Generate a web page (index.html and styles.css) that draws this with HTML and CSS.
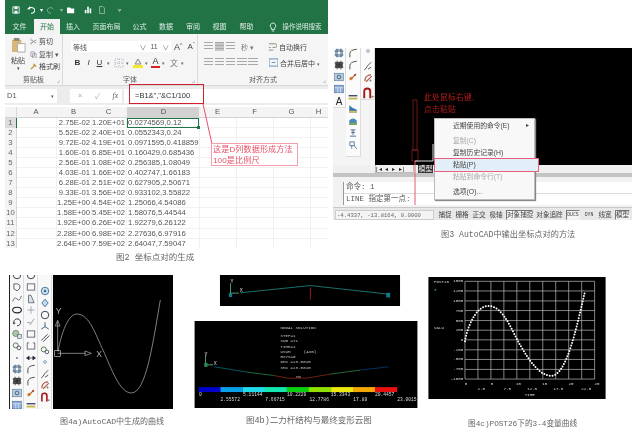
FILE: index.html
```html
<!DOCTYPE html>
<html lang="zh">
<head>
<meta charset="utf-8">
<title>坐标点对的生成</title>
<link rel="stylesheet" href="styles.css">
</head>
<body>
<svg class="defs" aria-hidden="true">
  <symbol id="i-cross" viewBox="0 0 16 16"><path d="M3 3h10v10H3zM1 5h14M1 11h14M5 1v14M11 1v14" fill="none" stroke="#4a6a8a" stroke-width="1.4"/></symbol>
  <symbol id="i-dark" viewBox="0 0 16 16"><path d="M2 3h12v10H2z" fill="#333"/><path d="M1 5h14M1 11h14M5 1v14M11 1v14" stroke="#555" stroke-width="1.4"/></symbol>
  <symbol id="i-img" viewBox="0 0 16 16"><rect x="1" y="2" width="14" height="12" fill="#b8cde0" stroke="#5a7a9a"/><circle cx="8" cy="8" r="3" fill="none" stroke="#3a5a7a" stroke-width="1.4"/></symbol>
  <symbol id="i-table" viewBox="0 0 16 16"><rect x="1" y="2" width="14" height="12" fill="#8fb0d8" stroke="#4a6a9a"/><path d="M1 6h14M6 6v8M10.500 6v8" stroke="#e8f0f8"/></symbol>
  <symbol id="i-fillet" viewBox="0 0 16 16"><path d="M3 15V9Q3 3 14 2" fill="none" stroke="#555" stroke-width="1.6"/></symbol>
  <symbol id="i-orange" viewBox="0 0 16 16"><path d="M3 13L13 3" stroke="#9a6a3a" stroke-width="2"/><circle cx="5" cy="10" r="2.600" fill="#d87a2a"/><circle cx="11" cy="5" r="1.500" fill="#c03020"/></symbol>
  <symbol id="i-bar" viewBox="0 0 16 16"><rect x="1" y="5" width="14" height="2" fill="#2a3a5a"/><rect x="1" y="9" width="14" height="3" fill="#c8b84a"/></symbol>
  <symbol id="i-layer" viewBox="0 0 16 16"><path d="M2 2l5 4 7 3v5H2z" fill="#3a7ab0"/><rect x="2" y="11" width="12" height="3" fill="#d8c060"/></symbol>
  <symbol id="i-layer2" viewBox="0 0 16 16"><path d="M2 7Q8 1 14 7v7H2z" fill="#4a8ab8"/><rect x="2" y="11" width="12" height="3" fill="#7aa850"/></symbol>
  <symbol id="i-stamp" viewBox="0 0 16 16"><path d="M4 3h8M8 3v8M3 13h10M5 7h6" stroke="#4a6a90" stroke-width="1.500" fill="none"/></symbol>
  <symbol id="i-stamp2" viewBox="0 0 16 16"><path d="M3 3h7v6H3zM6 9v5M9 8l5 6" stroke="#5a7a9a" stroke-width="1.500" fill="none"/></symbol>
  <symbol id="i-dot" viewBox="0 0 16 16"><circle cx="8" cy="8" r="2.200" fill="none" stroke="#6a8aa8" stroke-width="1.200"/></symbol>
  <symbol id="i-break" viewBox="0 0 16 16"><path d="M2 14Q5 13 7 8L13 2M8 13l5-3" stroke="#444" stroke-width="1.400" fill="none"/></symbol>
  <symbol id="i-ref" viewBox="0 0 16 16"><path d="M3 13C3 4 10 3 13 3M5 14l9-9" stroke="#b05a4a" stroke-width="1.800" fill="none"/><circle cx="12" cy="12" r="1.500" fill="#777"/></symbol>
  <symbol id="i-arch" viewBox="0 0 16 16"><path d="M3 15V6Q3 2 7 2t4 4v9" stroke="#a81818" stroke-width="2.600" fill="none"/><circle cx="14" cy="13" r="1.500" fill="#888"/></symbol>
  <symbol id="i-ring" viewBox="0 0 16 16"><circle cx="8" cy="8" r="6" fill="none" stroke="#445" stroke-width="1.600"/></symbol>
  <symbol id="i-ringb" viewBox="0 0 16 16"><circle cx="8" cy="8" r="6" fill="#cfe0ee" stroke="#3a6a98" stroke-width="1.400"/><circle cx="8" cy="8" r="2" fill="#3a6a98"/></symbol>
  <symbol id="i-blob" viewBox="0 0 16 16"><path d="M3 3h6l4 3-1 5-4 3-5-3z" fill="none" stroke="#445" stroke-width="1.300"/></symbol>
  <symbol id="i-wave" viewBox="0 0 16 16"><path d="M1 12Q4 3 8 8t7-5" fill="none" stroke="#556" stroke-width="1.300"/></symbol>
  <symbol id="i-ell" viewBox="0 0 16 16"><ellipse cx="8" cy="8" rx="7" ry="4.500" fill="none" stroke="#223" stroke-width="1.800"/></symbol>
  <symbol id="i-arc" viewBox="0 0 16 16"><path d="M3 10a5.500 5.500 0 1 1 5 4" fill="none" stroke="#334" stroke-width="1.600"/><path d="M1 9h5l-3 3z" fill="#334"/></symbol>
  <symbol id="i-hatch" viewBox="0 0 16 16"><circle cx="6" cy="7" r="5" fill="#a8c8a0" stroke="#567"/><rect x="9" y="9" width="6" height="6" fill="#ddd" stroke="#567"/></symbol>
  <symbol id="i-hatch2" viewBox="0 0 16 16"><circle cx="6" cy="7" r="4" fill="none" stroke="#4a7a4a" stroke-width="1.500"/><circle cx="11" cy="11" r="3" fill="none" stroke="#556" stroke-width="1.500"/></symbol>
  <symbol id="i-pt" viewBox="0 0 16 16"><circle cx="8" cy="8" r="1.300" fill="#223"/></symbol>
  <symbol id="i-sq" viewBox="0 0 16 16"><rect x="2" y="3" width="12" height="10" fill="none" stroke="#556" stroke-width="1.300"/></symbol>
  <symbol id="i-sq2" viewBox="0 0 16 16"><path d="M2 3h3M11 3h3v10H2V3" fill="none" stroke="#556" stroke-width="1.300"/></symbol>
  <symbol id="i-arrows" viewBox="0 0 16 16"><path d="M1 8h14M5 5L1 8l4 3zM11 5l4 3-4 3z" fill="#223" stroke="#223"/></symbol>
  <symbol id="i-tick" viewBox="0 0 16 16"><path d="M8 2v12M2 8h12" stroke="#8a9aa8" stroke-width="1.200"/></symbol>
  <symbol id="i-slash" viewBox="0 0 16 16"><path d="M2 9h5M6 13L13 3" stroke="#7a8a98" stroke-width="1.300"/></symbol>
  <symbol id="i-tri" viewBox="0 0 16 16"><path d="M4 14V2h4l5 12z" fill="#d8e0e8" stroke="#556" stroke-width="1.200"/></symbol>
  <symbol id="i-fork" viewBox="0 0 16 16"><path d="M8 2v7M8 9L2 13M8 9l6 4" stroke="#3a5a7a" stroke-width="1.500" fill="none"/></symbol>
  <symbol id="i-para" viewBox="0 0 16 16"><path d="M2 12L12 2M5 14L15 4" stroke="#445" stroke-width="1.500"/></symbol>
  <symbol id="i-diamond" viewBox="0 0 16 16"><path d="M8 2l5 6-5 6-5-6z" fill="#c8dcec" stroke="#2a6a9a" stroke-width="1.400"/></symbol>
</svg>

<main class="canvas">

  <section class="excel">
    <div class="qat">
      <svg class="qi" viewBox="0 0 10 10"><path d="M1 1h8v8H1z" fill="none" stroke="#fff"/><path d="M3 1h4v3H3zM3 6h4v3H3z" fill="#fff"/></svg>
      <svg class="qi ml7" viewBox="0 0 10 10"><path d="M2 4a4 3.500 0 1 1 3 5" fill="none" stroke="#fff" stroke-width="1.300"/><path d="M0 4h4V0z" fill="#fff"/></svg>
      <span class="qdrop">▾</span>
      <svg class="qi dim" viewBox="0 0 10 10"><path d="M8 4a4 3.500 0 1 0-3 5" fill="none" stroke="#b8d4c4" stroke-width="1"/></svg>
      <span class="qdrop dim">▾</span>
      <svg class="qi" viewBox="0 0 10 10"><path d="M0 2h4l1 1h4v6H0z" fill="#fff"/></svg>
      <svg class="qi ml9" viewBox="0 0 10 10"><path d="M1 5h2v4H1zM4 1h2v8H4zM7 3h2v6H7z" fill="#fff"/></svg>
      <svg class="qi ml6 dim" viewBox="0 0 10 10"><path d="M2 .5h4l2 2v7H2z" fill="none" stroke="#d8e8de"/></svg>
      <span class="qdrop last">▿</span>
    </div>
    <nav class="tabs">
      <span class="tab w29">文件</span>
      <span class="tab w26 active">开始</span>
      <span class="tab w26">插入</span>
      <span class="tab w41">页面布局</span>
      <span class="tab w25">公式</span>
      <span class="tab w28">数据</span>
      <span class="tab w26">审阅</span>
      <span class="tab w27">视图</span>
      <span class="tab w27">帮助</span>
      <svg class="bulb" viewBox="0 0 10 12"><path d="M5 1a3.500 3.500 0 0 0-2 6.300V9h4V7.300A3.500 3.500 0 0 0 5 1zM3.500 11h3" fill="none" stroke="#fff"/></svg>
      <span class="tab search">操作说明搜索</span>
    </nav>

    <div class="ribbon">
      <div class="group clip">
        <div class="group-body clip-body">
          <div class="paste">
            <svg class="paste-ic" viewBox="0 0 16 16"><rect x="1" y="2" width="10" height="13" fill="#d8b878"/><rect x="3" y="0" width="6" height="3" fill="#8a8a7a"/><path d="M7 6h8v9H7z" fill="#fff" stroke="#aaa"/></svg>
            <span class="paste-t">粘贴</span>
            <span class="paste-d">▾</span>
          </div>
          <div class="clip-list">
            <span class="clip-item"><i class="ci">✂</i>剪切</span>
            <span class="clip-item faint"><svg class="cs" viewBox="0 0 8 8"><path d="M1 1h4v5H1zM3 3h4v5H3z" fill="#fff" stroke="#99a"/></svg>复制 ▾</span>
            <span class="clip-item"><svg class="cs" viewBox="0 0 8 8"><path d="M1 7l4-4M4 1l3 3" stroke="#c09030" stroke-width="1.500"/></svg>格式刷</span>
          </div>
        </div>
        <div class="group-label">剪贴板<i class="launch">⌟</i></div>
      </div>

      <div class="group font">
        <div class="group-body font-body">
          <div class="font-row">
            <span class="combo name"><span>等线</span><b>∨</b></span>
            <span class="combo size"><span>11</span><b>∨</b></span>
            <span class="grow">A<sup>^</sup></span>
            <span class="grow small">A<sup>ˇ</sup></span>
          </div>
          <div class="font-row second">
            <b class="fb">B</b>
            <i class="fi">I</i>
            <u class="fu">U</u><span class="dd">▾</span>
            <svg class="fic" viewBox="0 0 10 10"><path d="M1 1h8v8H1zM5 1v8M1 5h8" fill="none" stroke="#b0b8c0" stroke-dasharray="1 1"/></svg><span class="dd">▾</span>
            <svg class="fic" viewBox="0 0 10 10"><path d="M5 1L2 6h6z" fill="#eee" stroke="#888"/><rect x="0" y="7" width="10" height="3" fill="#f2e92a"/></svg><span class="dd">▾</span>
            <span class="fa">A</span><span class="dd">▾</span>
            <span class="fw">文</span><span class="dd">▾</span>
          </div>
        </div>
        <div class="group-label">字体<i class="launch">⌟</i></div>
      </div>

      <div class="group align">
        <div class="group-body align-body">
          <div class="align-row">
            <span class="lines"></span><span class="lines sel"></span><span class="lines"></span>
            <span class="orient">秒 ▾</span>
            <svg class="wrap-ic" viewBox="0 0 10 10"><path d="M1 2h7a2 2 0 0 1 0 4H5M1 6h2M1 9h5" fill="none" stroke="#7a8a70"/></svg>
            <span class="align-t">自动换行</span>
          </div>
          <div class="align-row">
            <span class="lines"></span><span class="lines"></span><span class="lines"></span>
            <span class="indent"></span><span class="indent"></span>
            <svg class="wrap-ic merge" viewBox="0 0 10 10"><path d="M0 1h10v8H0zM3 5h4" fill="none" stroke="#5a8ac0"/></svg>
            <span class="align-t">合并后居中 <i class="dd">▾</i></span>
          </div>
        </div>
        <div class="group-label">对齐方式<i class="launch">⌟</i></div>
      </div>
    </div>

    <div class="formula">
      <span class="namebox">D1<i>▾</i></span>
      <span class="fx-btns"><i class="x">×</i><i class="ok">✓</i><i class="fx">fx</i></span>
      <span class="finput">=B1&amp;","&amp;C1/100</span>
    </div>

    <div class="sheet">
      <div class="row head">
        <span class="rh corner"></span><span class="c a">A</span><span class="c b">B</span><span class="c c3">C</span><span class="c d hi">D</span><span class="c e">E</span><span class="c e">F</span><span class="c e">G</span><span class="c h">H</span>
      </div>
      <div class="row"><span class="rh sel">1</span><span class="c a"></span><span class="c b">2.75E-02</span><span class="c c3">1.20E+01</span><span class="c d active-cell">0.0274569,0.12<i class="handle"></i></span><span class="rest"></span></div>
      <div class="row"><span class="rh">2</span><span class="c a"></span><span class="c b">5.52E-02</span><span class="c c3">2.40E+01</span><span class="c d">0.0552343,0.24</span><span class="rest"></span></div>
      <div class="row"><span class="rh">3</span><span class="c a"></span><span class="c b">9.72E-02</span><span class="c c3">4.19E+01</span><span class="c d">0.0971595,0.418859</span><span class="rest"></span></div>
      <div class="row"><span class="rh">4</span><span class="c a"></span><span class="c b">1.60E-01</span><span class="c c3">6.85E+01</span><span class="c d">0.160429,0.685436</span><span class="rest"></span></div>
      <div class="row"><span class="rh">5</span><span class="c a"></span><span class="c b">2.56E-01</span><span class="c c3">1.08E+02</span><span class="c d">0.256385,1.08049</span><span class="rest"></span></div>
      <div class="row"><span class="rh">6</span><span class="c a"></span><span class="c b">4.03E-01</span><span class="c c3">1.66E+02</span><span class="c d">0.402747,1.66183</span><span class="rest"></span></div>
      <div class="row"><span class="rh">7</span><span class="c a"></span><span class="c b">6.28E-01</span><span class="c c3">2.51E+02</span><span class="c d">0.627905,2.50671</span><span class="rest"></span></div>
      <div class="row"><span class="rh">8</span><span class="c a"></span><span class="c b">9.33E-01</span><span class="c c3">3.56E+02</span><span class="c d">0.933102,3.55822</span><span class="rest"></span></div>
      <div class="row"><span class="rh">9</span><span class="c a"></span><span class="c b">1.25E+00</span><span class="c c3">4.54E+02</span><span class="c d">1.25066,4.54086</span><span class="rest"></span></div>
      <div class="row"><span class="rh">10</span><span class="c a"></span><span class="c b">1.58E+00</span><span class="c c3">5.45E+02</span><span class="c d">1.58076,5.44544</span><span class="rest"></span></div>
      <div class="row"><span class="rh">11</span><span class="c a"></span><span class="c b">1.92E+00</span><span class="c c3">6.26E+02</span><span class="c d">1.92279,6.26122</span><span class="rest"></span></div>
      <div class="row"><span class="rh">12</span><span class="c a"></span><span class="c b">2.28E+00</span><span class="c c3">6.98E+02</span><span class="c d">2.27636,6.97916</span><span class="rest"></span></div>
      <div class="row"><span class="rh">13</span><span class="c a"></span><span class="c b">2.64E+00</span><span class="c c3">7.59E+02</span><span class="c d">2.64047,7.59047</span><span class="rest"></span></div>
    </div>
  </section>

  <div class="redbox"></div>
  <svg class="leader" viewBox="0 0 12 40"><path d="M1 0L10 40" stroke="#e8506a" fill="none"/></svg>
  <div class="callout">这是D列数据形成方法<br>100是比例尺</div>
  <p class="cap cap2">图2 坐标点对的生成</p>

  <section class="acad">
    <div class="acad-main">
      <div class="tools">
        <div class="tcol t1">
          <svg class="ti"><use href="#i-cross"/></svg>
          <svg class="ti"><use href="#i-dark"/></svg>
          <svg class="ti"><use href="#i-img"/></svg>
          <svg class="ti"><use href="#i-table"/></svg>
          <span class="ti-a">A</span>
        </div>
        <div class="tcol t2">
          <svg class="ti"><use href="#i-fillet"/></svg>
          <svg class="ti"><use href="#i-fillet"/></svg>
          <svg class="ti"><use href="#i-orange"/></svg>
          <svg class="ti spaced"><use href="#i-bar"/></svg>
          <svg class="ti"><use href="#i-layer"/></svg>
          <svg class="ti"><use href="#i-layer2"/></svg>
          <svg class="ti"><use href="#i-stamp"/></svg>
          <svg class="ti"><use href="#i-stamp2"/></svg>
        </div>
        <div class="tcol t3">
          <svg class="ti"><use href="#i-dot"/></svg>
          <svg class="ti sep"><use href="#i-break"/></svg>
          <svg class="ti"><use href="#i-ref"/></svg>
          <svg class="ti big"><use href="#i-arch"/></svg>
        </div>
      </div>
      <div class="acad-black"></div>
    </div>
    <div class="layout-bar">
      <span class="nav">|◂ ◂ ▸ ▸|</span>
      <span class="model-tab">模型</span>
    </div>
    <div class="acad-strip"></div>
    <div class="cmd">
      <div class="cmd-line">命令: 1</div>
      <div class="cmd-line">LINE 指定第一点:</div>
    </div>
    <div class="status">
      <span class="coords">-4.4337, -13.8164, 0.0000</span>
      <span class="st w14">捕捉</span>
      <span class="st w14">栅格</span>
      <span class="st w14">正交</span>
      <span class="st w14">极轴</span>
      <span class="st w27 on">对象捕捉</span>
      <span class="st w27">对象追踪</span>
      <span class="st w14 on latin">DUCS</span>
      <span class="st w12 latin">DYN</span>
      <span class="st w14">线宽</span>
      <span class="st w15 on">模型</span>
    </div>

    <svg class="acad-marks" viewBox="0 0 299 172">
      <path d="M80 52h4v50h-4zM79 102h6v11h-6z" fill="none" stroke="#a02020" stroke-width=".7"/>
      <path d="M82 113V157" stroke="#e85a70" fill="none"/>
      <path d="M82 113H100V96" stroke="#ddd" fill="none"/>
    </svg>
    <div class="acad-note">此处鼠标右键,<br>点击粘贴</div>

    <div class="ctx">
      <div class="ctx-item first"><span>近期使用的命令(E)</span><i>▸</i></div>
      <div class="ctx-item dim g1">复制(C)</div>
      <div class="ctx-item">复制历史记录(H)</div>
      <div class="ctx-item hl">粘贴(P)</div>
      <div class="ctx-item dim">粘贴到命令行(T)</div>
      <div class="ctx-item g2">选项(O)...</div>
    </div>
  </section>
  <p class="cap cap3">图3 AutoCAD中输出坐标点对的方法</p>

  <section class="fig4a">
    <div class="tools4">
      <div class="t4col">
        <svg class="ti4"><use href="#i-ring"/></svg>
        <svg class="ti4"><use href="#i-blob"/></svg>
        <svg class="ti4"><use href="#i-wave"/></svg>
        <svg class="ti4"><use href="#i-ell"/></svg>
        <svg class="ti4"><use href="#i-arc"/></svg>
        <svg class="ti4"><use href="#i-hatch"/></svg>
        <svg class="ti4"><use href="#i-hatch2"/></svg>
        <svg class="ti4"><use href="#i-pt"/></svg>
        <svg class="ti4"><use href="#i-cross"/></svg>
        <svg class="ti4"><use href="#i-dark"/></svg>
        <svg class="ti4"><use href="#i-img"/></svg>
        <svg class="ti4"><use href="#i-table"/></svg>
      </div>
      <div class="t4col">
        <svg class="ti4"><use href="#i-ring"/></svg>
        <svg class="ti4"><use href="#i-sq"/></svg>
        <svg class="ti4"><use href="#i-tri"/></svg>
        <svg class="ti4"><use href="#i-tick"/></svg>
        <svg class="ti4"><use href="#i-slash"/></svg>
        <svg class="ti4"><use href="#i-sq"/></svg>
        <svg class="ti4"><use href="#i-sq2"/></svg>
        <svg class="ti4"><use href="#i-arrows"/></svg>
        <svg class="ti4"><use href="#i-fillet"/></svg>
        <svg class="ti4"><use href="#i-fillet"/></svg>
        <svg class="ti4"><use href="#i-orange"/></svg>
        <svg class="ti4"><use href="#i-bar"/></svg>
      </div>
      <div class="t4col third">
        <svg class="ti4 gap"><use href="#i-ringb"/></svg>
        <svg class="ti4"><use href="#i-diamond"/></svg>
        <svg class="ti4"><use href="#i-ring"/></svg>
        <svg class="ti4"><use href="#i-fork"/></svg>
        <svg class="ti4"><use href="#i-para"/></svg>
        <svg class="ti4"><use href="#i-hatch2"/></svg>
        <svg class="ti4"><use href="#i-dot"/></svg>
        <svg class="ti4"><use href="#i-break"/></svg>
        <svg class="ti4"><use href="#i-ref"/></svg>
        <svg class="ti4"><use href="#i-arch"/></svg>
      </div>
    </div>
    <svg class="cad-plot" viewBox="160 30 360 402">
      <rect x="160" y="30" width="360" height="402" fill="#000"/>
      <path d="M175 260C185 205 205 147 232 147C270 147 290 215 310 255C335 310 360 384 395 384C440 384 460 230 482 105" fill="none" stroke="#bdbdbd" stroke-width="2"/>
      <path d="M174 255V168M174 265H258" stroke="#bbb" stroke-width="2" fill="none"/>
      <path d="M174 166l-7 17h14zM275 265l-19-7v14z" fill="none" stroke="#bbb" stroke-width="2"/>
      <rect x="165" y="257" width="17" height="17" fill="none" stroke="#ccc" stroke-width="2"/>
      <text class="ucs" x="168" y="148">Y</text>
      <text class="ucs" x="290" y="275">X</text>
    </svg>
  </section>
  <p class="cap cap4a">图4a)AutoCAD中生成的曲线</p>

  <svg class="fig4b-top" viewBox="88 30 546 94">
    <rect x="88" y="30" width="546" height="94" fill="#000"/>
    <path d="M150 84L362 62L598 88" fill="none" stroke="#2aa8a8" stroke-width="2"/>
    <path d="M362 68V105" stroke="#a01818" stroke-width="3"/>
    <path d="M120 92V55M120 85H145" stroke="#7fe8a0" stroke-width="2" fill="none"/>
    <path d="M115 85h10v12h-10z" fill="#127a8a"/>
    <path d="M592 84h12v14h-12z" fill="#127a8a"/>
    <text class="mini" x="120" y="53">Y</text>
    <text class="mini" x="148" y="82">X</text>
  </svg>

  <section class="fig4b">
    <svg class="nodal-svg" viewBox="12 168 671 262">
      <rect x="12" y="168" width="671" height="262" fill="#000"/>
      <g class="nodal">
        <text x="271" y="191">NODAL SOLUTION</text>
        <text x="271" y="216">STEP=1</text>
        <text x="271" y="232">SUB =71</text>
        <text x="271" y="248">TIME=1</text>
        <text x="271" y="264">USUM</text>
        <text x="341" y="264">(AVG)</text>
        <text x="271" y="280">RSYS=0</text>
        <text x="271" y="296">DMX =23.0015</text>
        <text x="271" y="312">SMX =23.0015</text>
        <text x="318" y="339">MX</text>
      </g>
      <path d="M72 306L170 322" stroke="#0c7a9a" stroke-width="2" fill="none"/>
      <path d="M170 322L250 332" stroke="#2aa050" stroke-width="2" fill="none"/>
      <path d="M250 332L292 340H350L420 328" stroke="#a83018" stroke-width="2" fill="none"/>
      <path d="M420 328L510 316" stroke="#3a9a50" stroke-width="2" fill="none"/>
      <path d="M510 316L596 306" stroke="#0a4a90" stroke-width="2" fill="none"/>
      <path d="M45 300V270M45 300H68" stroke="#7fe8a0" stroke-width="2" fill="none"/>
      <rect x="41" y="294" width="10" height="12" fill="#2a8a5a"/>
      <text class="mini" x="42" y="274">Y</text>
      <text class="mini" x="70" y="301">X</text>
      <g>
        <rect x="24" y="367" width="67" height="15" fill="#0000c8"/>
        <rect x="90" y="367" width="67" height="15" fill="#0aa0e8"/>
        <rect x="157" y="367" width="67" height="15" fill="#20dcec"/>
        <rect x="223" y="367" width="67" height="15" fill="#14e6b0"/>
        <rect x="290" y="367" width="67" height="15" fill="#08d010"/>
        <rect x="356" y="367" width="67" height="15" fill="#90e000"/>
        <rect x="423" y="367" width="67" height="15" fill="#eee810"/>
        <rect x="489" y="367" width="67" height="15" fill="#f4a808"/>
        <rect x="555" y="367" width="67" height="15" fill="#e81010"/>
      </g>
      <g class="scale">
        <text x="25" y="395">0</text>
        <text x="158" y="395">5.11144</text>
        <text x="290" y="395">10.2229</text>
        <text x="422" y="395">15.3343</text>
        <text x="555" y="395">20.4457</text>
        <text x="90" y="409">2.55572</text>
        <text x="225" y="409">7.66715</text>
        <text x="358" y="409">12.7786</text>
        <text x="490" y="409">17.89</text>
        <text x="622" y="409">23.0015</text>
      </g>
    </svg>
  </section>
  <p class="cap cap4b">图4b)二力杆结构与最终变形云图</p>

  <svg class="fig4c" viewBox="25 35 533 367">
    <rect x="25" y="35" width="533" height="367" fill="#000"/>
    <path class="grid-lines" d="M135 48V342M174 48V342M213 48V342M252 48V342M291 48V342M330 48V342M369 48V342M408 48V342M447 48V342M486 48V342M525 48V342M135 48H525M135 77H525M135 107H525M135 136H525M135 166H525M135 195H525M135 224H525M135 254H525M135 283H525M135 313H525M135 342H525"/>
    <path class="dots" d="M135 228C140 195 165 122 205 122C250 122 275 195 300 238C330 290 360 332 395 332C440 332 470 190 495 83"/>
    <g class="plot-t">
      <text x="42" y="52">POST26</text>
      <text x="42" y="77" class="g">3</text>
      <text x="42" y="191">VALU</text>
      <g class="yaxis">
        <text x="130" y="51">1500</text><text x="130" y="80">1250</text><text x="130" y="110">1000</text><text x="130" y="139">750</text><text x="130" y="169">500</text><text x="130" y="198">250</text><text x="130" y="227">0</text><text x="130" y="257">-250</text><text x="130" y="286">-500</text><text x="130" y="316">-750</text><text x="130" y="345">-1000</text>
      </g>
      <g class="xaxis">
        <text x="138" y="360">0</text><text x="216" y="360">5</text><text x="296" y="360">10</text><text x="375" y="360">15</text><text x="454" y="360">20</text><text x="532" y="360">25</text>
        <text x="184" y="376">2.5</text><text x="262" y="376">7.5</text><text x="337" y="376">12.5</text><text x="416" y="376">17.5</text><text x="500" y="376">22.5</text>
        <text x="330" y="392">TIME</text>
      </g>
    </g>
  </svg>
  <p class="cap cap4c">图4c)POST26下的3-4变量曲线</p>

</main>
</body>
</html>
```
FILE: styles.css
```css
* { box-sizing: border-box; }
html, body { margin: 0; background: #fff; }
.defs { position: absolute; width: 0; height: 0; }
.canvas {
  position: relative;
  width: 640px;
  height: 441px;
  overflow: hidden;
  background: #fff;
  font-family: "Liberation Sans", "Noto Sans CJK SC", sans-serif;
  color: #555;
  filter: blur(.45px);
}
i { font-style: normal; }

/* ---------- Excel ---------- */
.excel { position: absolute; left: 5px; top: 0; width: 323px; height: 248px; display: flex; flex-direction: column; background: #fff; overflow: hidden; }
.qat { height: 19px; background: #217346; display: flex; align-items: center; padding-left: 7px; color: #fff; font-size: 6px; flex: none; }
.qi { width: 8px; height: 8px; flex: none; }
.qi.dim { opacity: .7; }
.ml6 { margin-left: 6px; } .ml7 { margin-left: 7px; } .ml9 { margin-left: 9px; }
.qdrop { width: 6px; margin: 0 3px; text-align: center; flex: none; }
.qdrop.dim { opacity: .5; }
.qdrop.last { margin-left: 10px; }
.tabs { height: 15px; background: #217346; display: flex; align-items: center; flex: none; font-size: 7px; color: #dcebe3; }
.tab { height: 15px; line-height: 15px; text-align: center; flex: none; }
.w25 { width: 25px; } .w26 { width: 26px; } .w27 { width: 27px; } .w28 { width: 28px; } .w29 { width: 29px; } .w41 { width: 41px; }
.tab.active { background: #f3f3f3; color: #217346; }
.bulb { width: 8px; height: 10px; margin-left: 9px; flex: none; }
.tab.search { margin-left: 5px; width: 40px; font-size: 6.500px; white-space: nowrap; }

.ribbon { height: 52px; display: flex; background: #f5f5f5; border-bottom: 1px solid #d8d8d8; flex: none; }
.group { display: flex; flex-direction: column; border-right: 1px solid #dadada; position: relative; }
.group-body { flex: 1; min-height: 0; }
.group-label { height: 11px; line-height: 12px; font-size: 7px; text-align: center; color: #555; position: relative; flex: none; }
.launch { position: absolute; right: 2px; top: 0; color: #888; font-size: 6px; }
.clip { width: 58px; }
.clip-body { display: flex; padding: 3px 0 0 4px; }
.paste { width: 18px; display: flex; flex-direction: column; align-items: center; font-size: 7px; color: #444; }
.paste-ic { width: 15px; height: 17px; }
.paste-t { line-height: 9px; margin-top: 2px; }
.paste-d { line-height: 7px; font-size: 5px; }
.clip-list { display: flex; flex-direction: column; gap: 3px; padding-left: 3px; }
.clip-item { font-size: 7px; line-height: 9.500px; white-space: nowrap; color: #444; display: flex; align-items: center; }
.clip-item.faint { color: #555; }
.ci { width: 9px; font-size: 7px; color: #555; }
.cs { width: 7px; height: 7px; margin-right: 2px; }
.font { width: 135px; }
.font-body { display: flex; flex-direction: column; gap: 4px; padding: 7px 0 0 8px; }
.font-row { display: flex; align-items: center; height: 11px; }
.combo { display: flex; justify-content: space-between; align-items: center; font-size: 7px; height: 11px; background: #fff; color: #555; padding: 0 2px; }
.combo b { font-weight: 400; color: #777; }
.combo.name { width: 78px; }
.combo.size { width: 23px; margin-left: 0; }
.grow { font-size: 9px; color: #444; width: 12px; text-align: center; margin-left: 1px; }
.grow sup { font-size: 5px; vertical-align: 3px; line-height: 0; }
.grow.small { font-size: 8px; }
.font-row.second { padding-left: 1px; gap: 0; margin-top: 1px; }
.fb, .fi, .fu { font-size: 8px; color: #333; width: 11px; text-align: center; font-style: normal; }
.fi { font-style: italic; }
.dd { font-size: 5px; color: #666; width: 6px; text-align: center; font-style: normal; }
.fic { width: 10px; height: 10px; margin-left: 3px; }
.fa { font-size: 9px; color: #333; border-bottom: 2px solid #d82020; line-height: 9px; width: 9px; text-align: center; margin-left: 2px; }
.fw { font-size: 8px; color: #777; width: 10px; margin-left: 3px; text-align: center; }
.align { flex: 1; border-right: 0; }
.align-body { display: flex; flex-direction: column; gap: 5px; padding: 7px 0 0 5px; }
.align-row { display: flex; align-items: center; height: 11px; }
.lines { width: 11px; height: 9px; background: repeating-linear-gradient(to bottom, #a8a8a8 0 1px, transparent 1px 3px); border-inline: 1px solid transparent; background-clip: padding-box; }
.lines.sel { background-color: #c8c8c8; }
.orient { font-size: 7px; color: #777; width: 20px; margin-left: 5px; }
.indent { width: 10px; height: 9px; margin-left: 1px; background: repeating-linear-gradient(to bottom, #a8a8a8 0 1px, transparent 1px 3px); }
.align-row .indent:first-of-type { margin-left: 5px; }
.wrap-ic { width: 9px; height: 9px; margin-left: 7px; margin-right: 2px; }
.wrap-ic.merge { margin-left: 11px; }
.align-t { font-size: 7px; color: #444; white-space: nowrap; }

.formula { height: 19px; background: #ececec; display: flex; align-items: center; padding: 2px 0; flex: none; font-size: 7.500px; }
.namebox { width: 52px; height: 14px; background: #fff; color: #555; display: flex; justify-content: space-between; align-items: center; padding: 0 3px 0 2px; flex: none; }
.namebox i { font-size: 5px; }
.fx-btns { width: 52px; margin-left: 13px; display: flex; justify-content: space-between; align-items: center; height: 14px; background: #fff; padding: 0 4px 0 8px; flex: none; color: #aaa; }
.fx-btns .fx { font-family: "Liberation Serif", serif; font-style: italic; color: #555; }
.finput { flex: 1; height: 14px; background: #fff; line-height: 14px; padding-left: 11px; color: #333; margin-left: 2px; }

.sheet { flex: 1; display: flex; flex-direction: column; font-size: 7.700px; min-height: 0; padding-top: 2px; }
.row { display: grid; grid-template-columns: 12px 40px 35px 35px 73px 1fr; height: 10.060px; line-height: 10px; flex: none; border-bottom: 1px solid #f1f1f1; }
.row.head { grid-template-columns: 12px 40px 35px 35px 73px 37px 37px 37px 1fr; height: 11px; background: #f4f4f4; border-bottom: 1px solid #d4d4d4; color: #666; }
.rh { background: #f4f4f4; border-right: 1px solid #d8d8d8; text-align: center; color: #666; }
.rh.sel { background: #dcdcdc; border-right: 1px solid #217346; }
.rh.corner { position: relative; }
.c { border-right: 1px solid #f1f1f1; text-align: right; padding-right: 1px; white-space: nowrap; overflow: visible; color: #555; }
.c.a { text-align: center; }
.row .c.d { text-align: left; padding-left: 1px; padding-right: 0; border-right: 1px solid #f1f1f1; }
.head .c { text-align: center; }
.head .c.d { text-align: center; }
.c.hi { background: #d2d2d2; }
.head .c.e, .head .c.h { text-align: center; }
.active-cell { box-shadow: inset 0 0 0 1px #217346; position: relative; }
.handle { position: absolute; right: -1px; bottom: -1px; width: 3px; height: 3px; background: #217346; }
.rest { background: repeating-linear-gradient(to right, transparent 0 36px, #f1f1f1 36px 37px); }

.redbox { position: absolute; left: 129px; top: 84px; width: 75px; height: 20px; border: 1px solid #d02030; }
.leader { position: absolute; left: 202px; top: 104px; width: 12px; height: 40px; overflow: visible; }
.callout { position: absolute; left: 211px; top: 143px; width: 87px; height: 23px; border: 1px solid #f4a0ac; background: #fff; color: #e85068; font-size: 8.100px; line-height: 11px; padding: 0 0 0 1px; white-space: nowrap; letter-spacing: .1px; }
.cap { position: absolute; margin: 0; font-family: "Liberation Mono", "Noto Sans CJK SC", monospace; font-size: 8.500px; line-height: 11px; color: #666; white-space: nowrap; }
.cap2 { left: 116px; top: 253px; }
.cap3 { left: 441px; top: 229px; font-size: 8.200px; }
.cap4a { left: 60px; top: 416px; font-size: 8px; }
.cap4b { left: 246px; top: 416px; }
.cap4c { left: 468px; top: 419px; font-size: 7.700px; }

/* ---------- AutoCAD ---------- */
.acad { position: absolute; left: 333px; top: 48px; width: 299px; height: 172px; display: flex; flex-direction: column; background: #f2f2f2; }
.acad-main { height: 117px; display: flex; flex: none; }
.tools { width: 42px; display: flex; background: #f4f4f4; flex: none; align-items: flex-start; }
.tcol { display: flex; flex-direction: column; align-items: center; background: #fbfbfb; border-right: 1px solid #ddd; border-bottom: 1px solid #ddd; flex: none; }
.t1 { width: 13px; height: 60px; gap: 2px; }
.t2 { width: 15px; height: 109px; gap: 2px; }
.t3 { width: 14px; height: 52px; gap: 2px; }
.ti { width: 10px; height: 10px; flex: none; }
.t3 .ti:first-child { margin-top: -2px; }
.ti.spaced { margin-top: 8px; }
.ti.sep { margin-top: 3px; }
.ti.big { width: 12px; height: 12px; margin-top: 2px; }
.ti-a { font-size: 10px; color: #222; line-height: 11px; }
.acad-black { flex: 1; background: #000; }
.layout-bar { height: 8px; display: flex; padding-left: 42px; background: #f0f0f0; font-size: 6px; line-height: 8px; flex: none; color: #222; }
.nav { width: 39px; border: 1px solid #bbb; border-top: 0; white-space: nowrap; letter-spacing: 1px; overflow: hidden; }
.model-tab { width: 15px; margin-left: 4px; background: #333; color: #eee; text-align: center; font-size: 7px; }
.acad-strip { height: 4px; background: #c4c4c4; flex: none; }
.cmd { height: 23px; margin: 5px 0 0 10px; background: #fff; border-left: 1px solid #999; font-family: "Liberation Mono", "Noto Sans CJK SC", monospace; font-size: 7.500px; color: #555; flex: none; }
.cmd-line { height: 11.500px; line-height: 11.500px; padding-left: 2px; }
.cmd-line:first-child { border-bottom: 1px solid #ddd; }
.status { flex: 1; display: flex; align-items: center; padding: 2px 0 0 2px; background: #e8e8e8; font-size: 7px; color: #555; gap: 3px; white-space: nowrap; border-top: 1px solid #c8c8c8; margin-top: 2px; }
.coords { width: 99px; height: 10px; line-height: 9px; background: #f4f4f4; border: 1px solid #ccc; font-family: "Liberation Mono", monospace; font-size: 5.600px; color: #666; padding-left: 1px; flex: none; margin-right: 1px; }
.st { text-align: center; height: 10px; line-height: 9px; flex: none; font-size: 6.600px; color: #444; }
.st.latin { font-family: "Liberation Mono", monospace; font-size: 4.800px; }
.st.on { border: 1px solid #777; border-right-color: #eee; border-bottom-color: #eee; background: #f4f4f4; line-height: 8px; }
.w12 { width: 12px; } .w14 { width: 14px; } .w15 { width: 15px; } .w27 { width: 27px; }
.acad-marks { position: absolute; left: 0; top: 0; width: 299px; height: 172px; pointer-events: none; }
.acad-note { position: absolute; left: 91px; top: 44px; color: #b81c1c; font-size: 7.700px; line-height: 12px; letter-spacing: .3px; white-space: nowrap; }
.ctx { position: absolute; left: 101px; top: 70px; width: 101px; height: 82px; background: #f8f8f8; border: 1px solid #bbb; font-size: 6.800px; color: #444; box-shadow: 1px 1px 1px #888; }
.ctx-item { height: 12px; line-height: 12px; padding: 0 5px 0 18px; display: flex; justify-content: space-between; white-space: nowrap; }
.ctx-item.first { height: 13px; line-height: 13px; }
.ctx-item.dim { color: #a8a8a8; }
.g1 { margin-top: 3px; }
.g2 { margin-top: 3px; }
.ctx-item.hl { background: #e2eff8; outline: 1px solid #e8607a; width: 103px; }
.ctx-item i { font-size: 6px; }

/* ---------- Figure 4a ---------- */
.fig4a { position: absolute; left: 9px; top: 275px; width: 164px; height: 134px; display: flex; }
.tools4 { width: 44px; display: flex; background: #f8f8f8; border-left: 1px solid #222; flex: none; overflow: hidden; }
.t4col { width: 14px; display: flex; flex-direction: column; align-items: center; gap: 1.800px; margin-top: -5px; border-right: 1px solid #ddd; flex: none; }
.t4col.third { margin-top: 0; }
.ti4 { width: 10px; height: 10px; flex: none; }
.ti4.gap { margin-top: 11px; }
.cad-plot { width: 120px; height: 134px; display: block; flex: none; }
.ucs { font: 26px "Liberation Sans", sans-serif; fill: #aaa; }

/* ---------- Figure 4b ---------- */
.fig4b-top { position: absolute; left: 219px; top: 275px; width: 182px; height: 31px; }
.mini { font: 15px "Liberation Mono", monospace; fill: #ddd; }
.fig4b { position: absolute; left: 194px; top: 321px; width: 224px; height: 87px; }
.nodal-svg { display: block; width: 224px; height: 87px; }
.nodal text { font: 12.600px "Liberation Mono", monospace; fill: #ccc; }
.scale text { font: 14px "Liberation Mono", monospace; fill: #ddd; }

/* ---------- Figure 4c ---------- */
.fig4c { position: absolute; left: 428px; top: 277px; width: 178px; height: 122px; }
.grid-lines { fill: none; stroke: #c4c4c4; stroke-width: 2; }
.dots { fill: none; stroke: #fff; stroke-width: 6; stroke-linecap: round; stroke-dasharray: 0 8.500; }
.plot-t text { font: 12.500px "Liberation Mono", monospace; fill: #ddd; }
.plot-t .g { fill: #4caf80; }
.yaxis text { text-anchor: end; }
.xaxis text { text-anchor: middle; }
```
